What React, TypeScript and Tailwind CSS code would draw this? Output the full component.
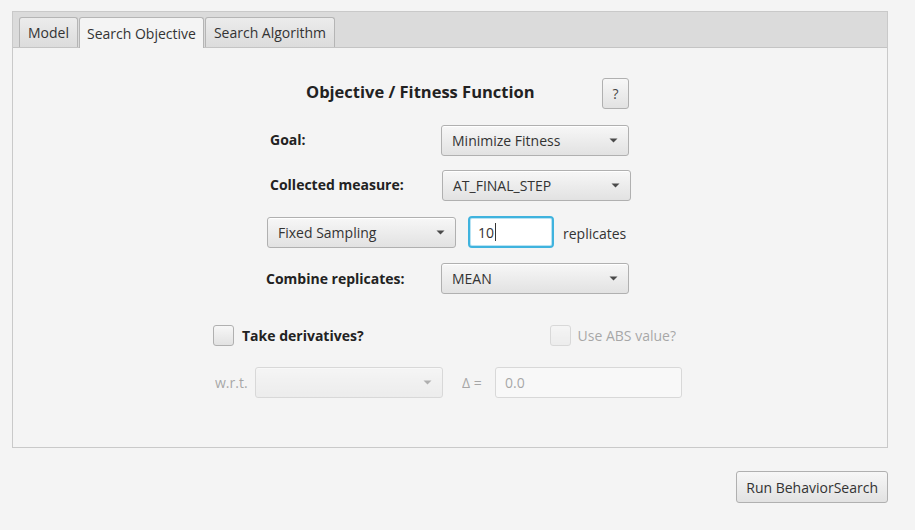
import React from "react";

const font = { fontFamily: '"Open Sans", "Noto Sans", Arial, sans-serif' };

function Arrow() {
  return (
    <svg width="9" height="5" viewBox="0 0 9 5" className="shrink-0">
      <path d="M0.5 0.5 L8.5 0.5 L4.5 4.5 Z" fill="#4a4a4a" />
    </svg>
  );
}

function Combo({ text, w, disabled }: { text: string; w: string; disabled?: boolean }) {
  return (
    <div
      className={`${w} h-[31px] flex items-center justify-between pl-[10px] pr-[10px] rounded-[3px] border border-[#b0b0b0] bg-gradient-to-b from-[#f7f7f7] to-[#e2e2e2] shadow-[inset_0_1px_0_#ffffff] text-[14px] text-[#333] ${disabled ? "opacity-40" : ""}`}
    >
      <span>{text}</span>
      <Arrow />
    </div>
  );
}

export default function App() {
  return (
    <div className="w-[915px] h-[530px] bg-[#f4f4f4] pt-[11px] pl-[12px] overflow-hidden" style={font}>
      <div className="w-[876px] h-[437px] border border-[#c9c9c9] flex flex-col">
        <div className="h-[36px] bg-[#dbdbdb] border-b border-[#c4c4c4] flex items-end pl-[6px] gap-[2px] shrink-0">
          <div className="h-[30px] px-[8px] flex items-center rounded-t-[3px] border border-b-0 border-[#b5b5b5] bg-gradient-to-b from-[#ececec] to-[#dcdcdc] text-[14px] text-[#333]">
            Model
          </div>
          <div className="h-[31px] -mb-px -ml-px px-[7px] flex items-center rounded-t-[3px] border border-b-0 border-[#b5b5b5] bg-[#f4f4f4] text-[14px] text-[#333]">
            Search Objective
          </div>
          <div className="h-[30px] -ml-px px-[8px] flex items-center rounded-t-[3px] border border-b-0 border-[#b5b5b5] bg-gradient-to-b from-[#ececec] to-[#dcdcdc] text-[14px] text-[#333]">
            Search Algorithm
          </div>
        </div>
        <div className="flex-1 flex flex-col text-[#333]">
          <div className="mt-[30px] pl-[293px] flex items-center h-[31px]">
            <div className="w-[296px] text-[16.5px] font-bold text-[#222] -mt-[2px]">Objective / Fitness Function</div>
            <div className="w-[27px] h-[31px] flex items-center justify-center rounded-[3px] border border-[#b0b0b0] bg-gradient-to-b from-[#f7f7f7] to-[#e2e2e2] text-[14px] text-[#444]">
              ?
            </div>
          </div>
          <div className="mt-[16px] pl-[257px] flex items-center">
            <div className="w-[171px] text-[14px] font-bold text-[#222] -mt-[2px]">Goal:</div>
            <Combo text="Minimize Fitness" w="w-[188px]" />
          </div>
          <div className="mt-[14px] pl-[257px] flex items-center">
            <div className="w-[172px] text-[14px] font-bold text-[#222] -mt-[2px]">Collected measure:</div>
            <Combo text="AT_FINAL_STEP" w="w-[189px]" />
          </div>
          <div className="mt-[15px] pl-[254px] flex items-center">
            <Combo text="Fixed Sampling" w="w-[189px]" />
            <div className="ml-[12px] w-[86px] h-[32px] rounded-[4px] border-2 border-[#3fb3de] bg-white shadow-[inset_0_0_0_1px_#b9e3f3] flex items-center pl-[8px] text-[14px] text-[#333]">
              10<span className="inline-block w-px h-[18px] bg-[#333] ml-px"></span>
            </div>
            <div className="ml-[9px] text-[14px] text-[#333] mt-[3px]">replicates</div>
          </div>
          <div className="mt-[15px] pl-[253px] flex items-center">
            <div className="w-[175px] text-[14px] font-bold text-[#222]">Combine replicates:</div>
            <Combo text="MEAN" w="w-[188px]" />
          </div>
          <div className="mt-[30px] pl-[200px] flex items-center h-[22px]">
            <div className="w-[21px] h-[21px] rounded-[3px] border border-[#b0b0b0] bg-gradient-to-b from-[#f7f7f7] to-[#e2e2e2]"></div>
            <div className="ml-[8px] text-[14px] font-bold text-[#222]">Take derivatives?</div>
            <div className="ml-[186px] flex items-center opacity-40">
              <div className="w-[21px] h-[21px] rounded-[3px] border border-[#b0b0b0] bg-gradient-to-b from-[#f7f7f7] to-[#e2e2e2]"></div>
              <div className="ml-[7px] text-[14px] text-[#333]">Use ABS value?</div>
            </div>
          </div>
          <div className="mt-[21px] pl-[202px] flex items-center">
            <div className="w-[40px] text-[14px] text-[#333] opacity-40">w.r.t.</div>
            <Combo text="" w="w-[188px]" disabled />
            <div className="ml-[19px] w-[33px] text-[14px] text-[#333] opacity-40">Δ =</div>
            <div className="w-[187px] h-[31px] rounded-[3px] border border-[#b0b0b0] bg-white flex items-center pl-[9px] text-[14px] text-[#333] opacity-40">
              0.0
            </div>
          </div>
        </div>
      </div>
      <div className="w-[876px] flex justify-end mt-[23px]">
        <div className="h-[32px] px-[9px] flex items-center rounded-[3px] border border-[#b0b0b0] bg-gradient-to-b from-[#f7f7f7] to-[#e2e2e2] text-[14px] text-[#333]">
          Run BehaviorSearch
        </div>
      </div>
    </div>
  );
}
